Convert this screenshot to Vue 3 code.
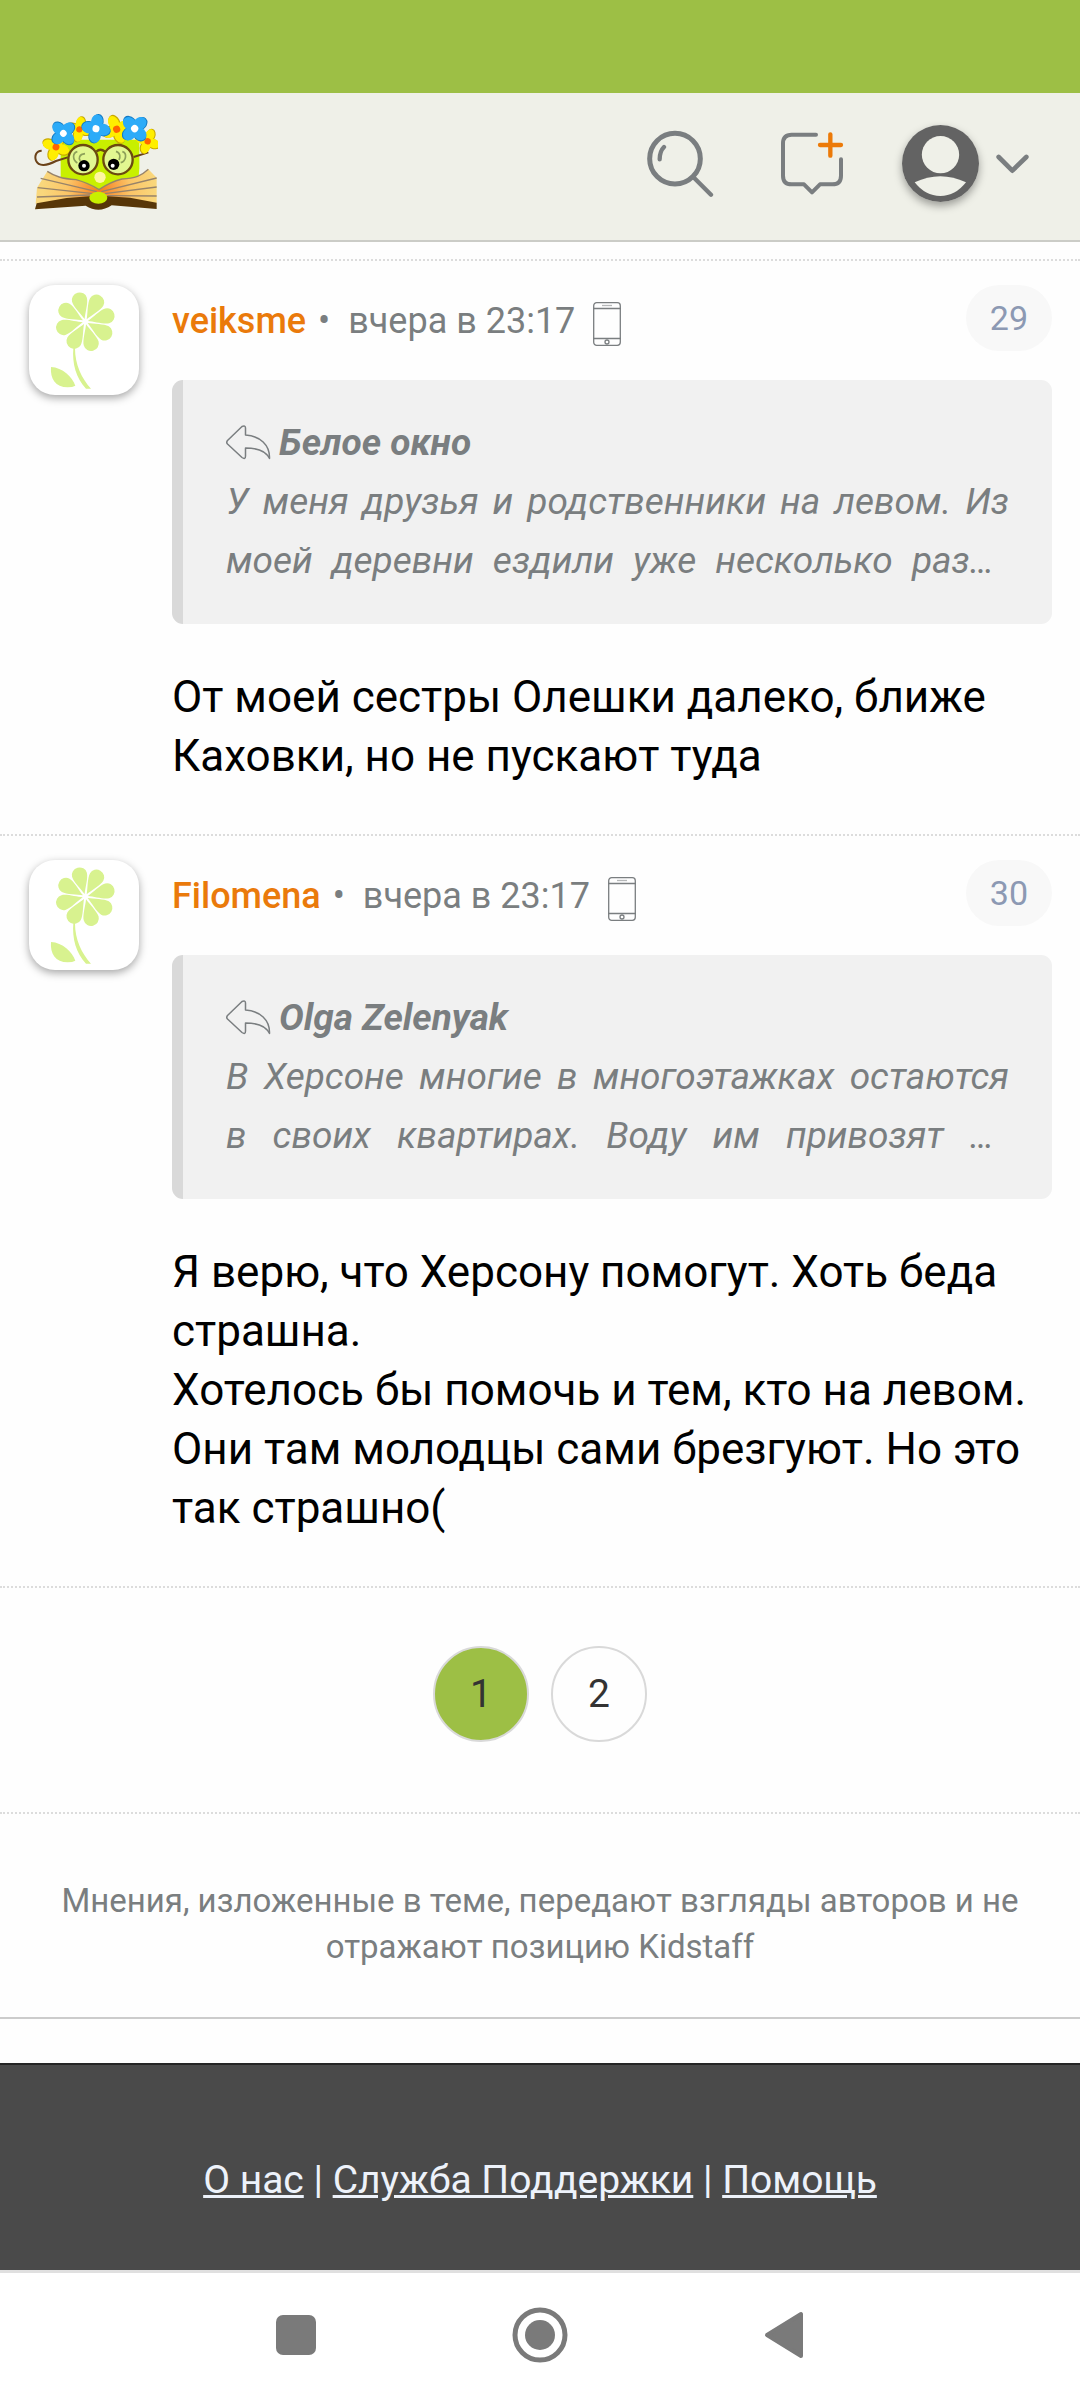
<script setup>
const posts = [
  {
    number: 29,
    author: 'veiksme',
    time: 'вчера в 23:17',
    quoteAuthor: 'Белое окно',
    quote: ['У меня друзья и родственники на левом. Из', 'моей деревни ездили уже несколько раз…'],
    body: ['От моей сестры Олешки далеко, ближе Каховки, но не пускают туда'],
  },
  {
    number: 30,
    author: 'Filomena',
    time: 'вчера в 23:17',
    quoteAuthor: 'Olga Zelenyak',
    quote: ['В Херсоне многие в многоэтажках остаются', 'в своих квартирах. Воду им привозят …'],
    body: [
      'Я верю, что Херсону помогут. Хоть беда страшна.',
      'Хотелось бы помочь и тем, кто на левом. Они там молодцы сами брезгуют. Но это так страшно(',
    ],
  },
]

const petals = [-15, 30, 75, 120, 165, 210, 255, 300]

const blueFlowers = [
  { x: 190, y: 157, s: 1.12, r: 45 },
  { x: 288, y: 143, s: 1.18, r: 8 },
  { x: 404, y: 143, s: 1.2, r: 45 },
]
const yellowFlowers = [
  { x: 168, y: 198, s: 1.15, r: 20 },
  { x: 238, y: 145, s: 1.05, r: 10 },
  { x: 350, y: 145, s: 1.2, r: 65 },
  { x: 443, y: 181, s: 1.05, r: 20 },
]
</script>

<template>
  <div class="page">
    <div class="status-bar"></div>

    <header class="header">
      <a class="logo" href="#" aria-label="Kidstaff">
        <svg width="124" height="98" viewBox="102 96 372 294">
          <path d="M182 176H418V262L415 300L297 330L182 290Z" fill="#c8f000" />
          <path d="M125 209C108 209 103 226 108 239C116 258 141 254 168 240L203 229" fill="none" stroke="#6b4218" stroke-width="6" />
          <path d="M401 228L445 214" stroke="#6b4218" stroke-width="6" />
          <g v-for="(f, i) in yellowFlowers" :key="'y' + i" :transform="`translate(${f.x} ${f.y}) rotate(${f.r}) scale(${f.s})`">
            <g fill="#c9a800">
              <ellipse v-for="a in [0, 90, 180, 270]" :key="a" cx="2" cy="-18" rx="14" ry="20" :transform="`rotate(${a})`" />
            </g>
            <g fill="#ffee00">
              <ellipse v-for="a in [0, 90, 180, 270]" :key="a" cx="0" cy="-18" rx="13" ry="18" :transform="`rotate(${a})`" />
            </g>
            <circle r="9" fill="#ff6500" />
          </g>
          <g v-for="(f, i) in blueFlowers" :key="'b' + i" :transform="`translate(${f.x} ${f.y}) rotate(${f.r}) scale(${f.s})`">
            <g fill="#1279c4">
              <ellipse v-for="a in [0, 90, 180, 270]" :key="a" cx="2" cy="-19" rx="15" ry="19" :transform="`rotate(${a})`" />
            </g>
            <g fill="#2cabf8">
              <ellipse v-for="a in [0, 90, 180, 270]" :key="a" cx="0" cy="-18" rx="15" ry="18" :transform="`rotate(${a})`" />
            </g>
            <circle r="9" fill="#fff" />
          </g>
          <g fill="#e2f791" stroke="#6b4a10" stroke-width="7">
            <circle cx="249" cy="236" r="44" />
            <circle cx="354" cy="236" r="44" />
            <path d="M289 212Q301 200 315 212" fill="none" />
          </g>
          <g fill="none" stroke="#8da05a" stroke-width="5">
            <path d="M232 212C217 216 217 236 232 246M255 218C237 220 235 232 241 240" />
            <path d="M367 212C382 216 379 240 362 245M348 211C362 215 361 229 357 237" />
          </g>
          <circle cx="252" cy="254" r="17" />
          <circle cx="341" cy="250" r="17" />
          <g fill="#fff">
            <circle cx="252" cy="254" r="6" />
            <circle cx="338" cy="254" r="6" />
          </g>
          <circle cx="300" cy="289" r="17" fill="#fff6a0" />
          <defs>
            <radialGradient id="pages" gradientUnits="userSpaceOnUse" cx="297" cy="325" r="170">
              <stop offset="0" stop-color="#f77a1d" />
              <stop offset=".55" stop-color="#fbc567" />
              <stop offset="1" stop-color="#f9d77c" />
            </radialGradient>
          </defs>
          <path d="M142 271C165 286 185 293 228 296Q265 308 297 328Q330 305 366 294C405 293 425 284 445 265L470 290V366L297 352L107 368L111 320Z" fill="url(#pages)" />
          <g fill="none" stroke="#97836a" stroke-width="4">
            <path d="M142 271C165 286 185 293 228 296Q265 306 297 326Q330 303 366 294C405 293 425 284 445 265" />
            <path d="M122 292L290 332M113 320L280 338M111 348L270 342M470 291L304 332M470 318L314 338M470 345L322 344" />
          </g>
          <path d="M110 367L200 351L268 346H322L390 350L470 365V384L335 373Q296 399 257 374L105 385Z" fill="#573608" />
          <ellipse cx="295" cy="350" rx="27" ry="18" fill="#c8f000" />
        </svg>
      </a>
      <div class="tools">
        <button class="tool search" type="button" aria-label="Поиск">
          <svg width="68" height="69" viewBox="78 118 204 207" fill="none" stroke="#7a7e80" stroke-linecap="round">
            <circle cx="165" cy="207" r="76" stroke-width="15" />
            <path d="M132 172Q119 185 119 209M222 264L273 315" stroke-width="13" />
          </svg>
        </button>
        <button class="tool chat" type="button" aria-label="Новая тема">
          <svg width="64" height="65" viewBox="480 124 192 195" fill="none" stroke-width="12" stroke-linecap="round" stroke-linejoin="round">
            <path d="M588 135H515Q489 135 489 161V258Q489 284 515 284H552L576 308L600 284H637Q663 284 663 258V209" stroke="#7a7e80" />
            <path d="M631 134V198M600 166H663" stroke="#ec7a08" stroke-width="13" />
          </svg>
        </button>
        <button class="tool user" type="button" aria-label="Профиль">
          <svg width="77" height="77" viewBox="0 0 231 231">
            <circle cx="115.500" cy="115.500" r="115.500" fill="#636363" />
            <circle cx="115.500" cy="89" r="56" fill="#eff0e8" />
            <path d="M38 172Q115 136 192 172Q160 213 115 213Q70 213 38 172Z" fill="#eff0e8" />
          </svg>
        </button>
        <button class="tool" type="button" aria-label="Меню">
          <svg width="35" height="22" viewBox="1125 184 105 66" fill="none" stroke="#7a7e80" stroke-width="14" stroke-linecap="round" stroke-linejoin="round">
            <path d="M1136 196L1177 237L1219 196" />
          </svg>
        </button>
      </div>
    </header>

    <main class="thread">
      <article v-for="post in posts" :key="post.number" class="post">
        <a class="avatar" href="#" :aria-label="post.author">
          <svg width="110" height="110" viewBox="27 45 330 330" fill="#d8f28f">
            <g transform="translate(196 155)">
              <path
                v-for="angle in petals"
                :key="angle"
                d="M0-8C-6-25-23-52-23-68A23 22 0 0 1 23-68C23-52 6-25 0-8Z"
                :transform="`rotate(${angle})`"
              />
            </g>
            <path d="M160 234C156 280 168 325 198 356H213C185 325 165 285 165 234Z" />
            <path d="M93 291C90 325 106 352 143 352Q158 352 166 347C156 320 128 293 93 291Z" />
          </svg>
        </a>
        <div class="content">
          <div class="meta">
            <div class="byline">
              <a class="author" href="#">{{ post.author }}</a>
              <span class="dot">•</span>
              <time>{{ post.time }}</time>
              <svg class="phone" width="28" height="44" viewBox="0 0 28 44" fill="none" stroke="#7a7e80" stroke-width="1.300">
                <rect x="0.700" y="0.700" width="26.600" height="42.600" rx="3" />
                <path d="M0 6.500H28M0 36.500H28" />
                <path d="M9 3.500H19" stroke="#b5b7b8" />
                <circle cx="14" cy="40" r="2" />
              </svg>
            </div>
            <a class="number" href="#">{{ post.number }}</a>
          </div>
          <blockquote class="quote">
            <div class="quote-author">
              <svg width="45" height="35" viewBox="0 0 45 35" fill="none" stroke="#7a7e80" stroke-width="1.500" stroke-linejoin="round">
                <path d="M1.500 15.500L16 1.500Q19.500 0 19.500 3V10C34 11 44 20 43.500 33.500C40 26 32 23 19.500 23V31Q19.500 35 16 32.500L1.500 19Q0 17.500 1.500 15.500Z" />
              </svg>
              <strong>{{ post.quoteAuthor }}</strong>
            </div>
            <p class="quote-text">
              <span v-for="line in post.quote" :key="line" class="quote-line">{{ line }}</span>
            </p>
          </blockquote>
          <div class="body">
            <p v-for="text in post.body" :key="text">{{ text }}</p>
          </div>
        </div>
      </article>
    </main>

    <nav class="pagination" aria-label="Страницы">
      <a class="page-link current" href="#" aria-current="page">1</a>
      <a class="page-link" href="#">2</a>
    </nav>

    <p class="disclaimer">Мнения, изложенные в теме, передают взгляды авторов и не отражают позицию Kidstaff</p>

    <footer class="footer">
      <a href="#">О нас</a> | <a href="#">Служба Поддержки</a> | <a href="#">Помощь</a>
    </footer>

    <nav class="system-nav">
      <button class="tool" type="button" aria-label="Недавние">
        <svg width="56" height="56" viewBox="0 0 56 56" fill="#7a7a7a"><rect x="8" y="8" width="40" height="40" rx="7" /></svg>
      </button>
      <button class="tool" type="button" aria-label="Домой">
        <svg width="56" height="56" viewBox="0 0 56 56" fill="#7a7a7a">
          <circle cx="28" cy="28" r="25" fill="none" stroke="#7a7a7a" stroke-width="5" />
          <circle cx="28" cy="28" r="15" />
        </svg>
      </button>
      <button class="tool" type="button" aria-label="Назад">
        <svg width="56" height="56" viewBox="0 0 56 56" fill="#7a7a7a" stroke="#7a7a7a" stroke-width="4" stroke-linejoin="round">
          <path d="M11 28L45 7V49Z" />
        </svg>
      </button>
    </nav>
  </div>
</template>

<style>
body {
  margin: 0;
  background: #fefefe;
}
</style>

<style scoped>
.page {
  font-family: Roboto, "Noto Sans", sans-serif;
  font-size: 36px;
  color: #7a7e80;
  background: #fefefe;
}
a {
  color: inherit;
  text-decoration: none;
}
p {
  margin: 0;
}
svg {
  display: block;
}
.status-bar {
  height: 93px;
  background: #9dbf45;
}
.header {
  display: flex;
  align-items: center;
  justify-content: space-between;
  height: 141px;
  padding: 0 50px 6px 34px;
  background: #eff0e8;
  border-bottom: 2px solid #cbccc7;
}
.logo {
  margin-bottom: 4px;
}
.tools {
  display: flex;
  align-items: center;
  gap: 16px;
}
.tool {
  padding: 0;
  border: 0;
  background: none;
}
.search {
  margin-right: 50px;
}
.chat {
  margin-right: 42px;
}
.user {
  border-radius: 50%;
  box-shadow: 0 4px 8px rgba(0, 0, 0, 0.35);
}
.thread {
  padding-top: 17px;
}
.post {
  display: flex;
  gap: 33px;
  padding: 24px 28px 48px 29px;
  border-top: 2px dotted #dcdcdc;
}
.avatar {
  flex: none;
  width: 110px;
  height: 110px;
  border-radius: 26px;
  overflow: hidden;
  background: #fff;
  box-shadow: 0 3px 8px rgba(0, 0, 0, 0.35);
}
.content {
  flex: 1;
  min-width: 0;
}
.meta {
  display: flex;
  justify-content: space-between;
  align-items: flex-start;
  height: 95px;
}
.byline {
  display: flex;
  line-height: 72px;
}
.author {
  color: #ea7a0b;
  font-weight: 500;
}
.dot {
  margin: 0 18px 0 12px;
}
.phone {
  margin: 17px 0 0 18px;
}
.number {
  padding: 0 24px;
  border-radius: 33px;
  background: #f8f8f8;
  color: #8c99b3;
  font-size: 34px;
  line-height: 66px;
}
.quote {
  margin: 0;
  padding: 33px 43px 34px;
  border-left: 11px solid #d9d9d9;
  border-radius: 11px;
  background: #f1f1f1;
  font-size: 37px;
  font-style: italic;
  line-height: 59px;
}
.quote-author {
  display: flex;
  align-items: center;
  gap: 8px;
}
.quote-author strong {
  font-weight: 700;
}
.quote-line {
  display: block;
  text-align: justify;
  text-align-last: justify;
}
.quote-line:last-child {
  padding-right: 15px;
}
.body {
  margin-top: 44px;
  color: #000;
  font-size: 44px;
  line-height: 59px;
}
.pagination {
  display: flex;
  justify-content: center;
  gap: 22px;
  padding: 58px 0 70px;
  border-top: 2px dotted #dcdcdc;
}
.page-link {
  width: 92px;
  border: 2px solid #d9d9d9;
  border-radius: 50%;
  color: #333;
  font-size: 39px;
  line-height: 92px;
  text-align: center;
}
.current {
  background: #9dbf45;
}
.disclaimer {
  padding: 64px 48px 47px;
  border-top: 2px dotted #dcdcdc;
  border-bottom: 2px solid #ccc;
  font-size: 33px;
  line-height: 46px;
  text-align: center;
}
.footer {
  margin-top: 44px;
  padding: 92px 48px 67px;
  border-top: 2px solid #252525;
  background: #4a4a4a;
  color: #edf2fa;
  font-size: 39px;
  line-height: 46px;
  text-align: center;
}
.footer a {
  text-decoration: underline;
}
.system-nav {
  display: flex;
  justify-content: center;
  gap: 188px;
  padding: 34px 0 37px;
  border-top: 3px solid #e0e0e0;
  background: #fff;
}
</style>
